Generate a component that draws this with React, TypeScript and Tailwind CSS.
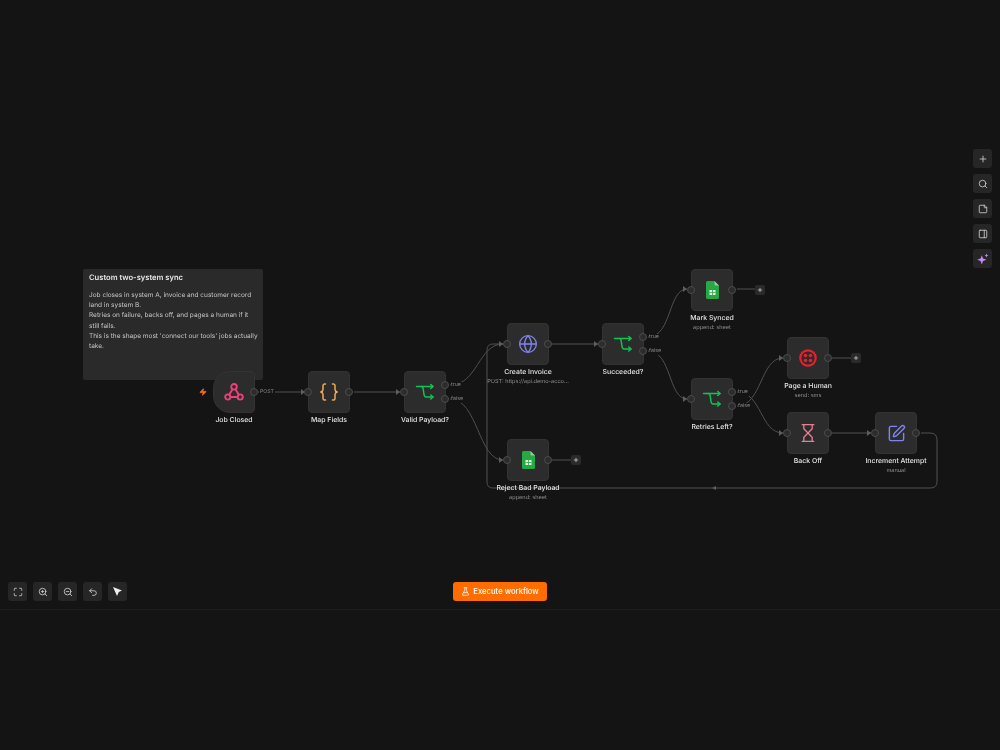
import { ReactNode } from 'react';
import { Maximize, ZoomIn, ZoomOut, Undo2, Plus, Search, StickyNote, PanelRight, Zap, FlaskConical, SquarePen, Hourglass, Globe } from 'lucide-react';

// canvas nodes: x/y are the node's top-left corner in the picture
type FlowNode = {
  id: string;
  x: number;
  y: number;
  label: string;
  sub?: string;
  icon: ReactNode;
  trigger?: boolean;
  outputs?: 'one' | 'branch';
  noInput?: boolean;
  plus?: boolean;
};

function IfIcon() {
  return (
    <svg width="20" height="20" viewBox="0 0 20 20" fill="none" stroke="#0fc552" strokeWidth="1.500" strokeLinecap="round" strokeLinejoin="round">
      <path d="M1.500 4.500H18" />
      <path d="M15.800 2.500 18 4.500l-2.200 2" />
      <path d="M6.500 4.500c1.200 0 1.500 1 1.800 3l.6 4.500c.3 2 .8 3 2.200 3H18" />
      <path d="M15.800 13 18 15l-2.200 2" />
    </svg>
  );
}

function SheetIcon() {
  return (
    <svg width="13" height="18" viewBox="0 0 13 18">
      <path d="M1.500 0H8.500L13 4.500V16.500A1.500 1.500 0 0 1 11.500 18H1.500A1.500 1.500 0 0 1 0 16.500V1.500A1.500 1.500 0 0 1 1.500 0Z" fill="#28a745" />
      <path d="M8.500 0 13 4.500H9.500a1 1 0 0 1-1-1Z" fill="#86d19a" />
      <path d="M3.500 9h6v5h-6z" fill="#e8f5e9" />
      <path d="M3.500 11.500h6M6.500 9v5" stroke="#28a745" strokeWidth="0.800" />
    </svg>
  );
}

function BracesIcon() {
  return (
    <svg width="20" height="20" viewBox="0 0 20 20" fill="none" stroke="#f0ab55" strokeWidth="1.500" strokeLinecap="round" strokeLinejoin="round">
      <path d="M6.500 2H5.500C4.400 2 4 2.700 4 3.800v3.700C4 8.700 3.200 9.600 1.800 10 3.200 10.400 4 11.300 4 12.500v3.700C4 17.300 4.400 18 5.500 18h1" />
      <path d="M13.500 2h1c1.100 0 1.500.7 1.500 1.800v3.700c0 1.200.8 2.100 2.200 2.500-1.400.4-2.200 1.300-2.200 2.500v3.700c0 1.100-.4 1.800-1.500 1.800h-1" />
    </svg>
  );
}

function TwilioIcon() {
  return (
    <svg width="18" height="18" viewBox="0 0 18 18" fill="none">
      <circle cx="9" cy="9" r="7.700" stroke="#e8202e" strokeWidth="2.200" />
      <circle cx="6.500" cy="6.500" r="1.800" fill="#e8202e" />
      <circle cx="11.500" cy="6.500" r="1.800" fill="#e8202e" />
      <circle cx="6.500" cy="11.500" r="1.800" fill="#e8202e" />
      <circle cx="11.500" cy="11.500" r="1.800" fill="#e8202e" />
    </svg>
  );
}

function WebhookIcon() {
  return (
    <svg width="20" height="20" viewBox="0 0 20 20" fill="none" stroke="#ec407a" strokeWidth="1.900" strokeLinecap="round" strokeLinejoin="round">
      <circle cx="10" cy="4.800" r="2.800" />
      <circle cx="3.800" cy="15" r="2.600" />
      <circle cx="16.200" cy="15" r="2.600" />
      <path d="M8.500 7.200 5.200 12.800" />
      <path d="M11.500 7.200l3.300 5.600" />
      <path d="M6.400 15h7.200" />
    </svg>
  );
}

function SparkIcon() {
  return (
    <svg width="12" height="12" viewBox="0 0 12 12" fill="#c58af9">
      <path d="M4.800 2.200 6 5.600l3.400 1.200L6 8 4.800 11.400 3.600 8 .2 6.800l3.400-1.200Z" />
      <path d="M9.500.5l.6 1.400 1.400.6-1.400.6-.6 1.400-.6-1.400-1.400-.6 1.400-.6Z" />
    </svg>
  );
}

const nodes: FlowNode[] = [
  { id: 'job', x: 213, y: 371, label: 'Job Closed', trigger: true, noInput: true, outputs: 'one', icon: <WebhookIcon /> },
  { id: 'map', x: 308, y: 371, label: 'Map Fields', outputs: 'one', icon: <BracesIcon /> },
  { id: 'valid', x: 404, y: 371, label: 'Valid Payload?', outputs: 'branch', icon: <IfIcon /> },
  { id: 'invoice', x: 507, y: 323, label: 'Create Invoice', sub: 'POST: https://api.demo-acco...', outputs: 'one', icon: <Globe size={20} color="#8183ec" strokeWidth={1.6} /> },
  { id: 'reject', x: 507, y: 439, label: 'Reject Bad Payload', sub: 'append: sheet', outputs: 'one', plus: true, icon: <SheetIcon /> },
  { id: 'succeeded', x: 602, y: 323, label: 'Succeeded?', outputs: 'branch', icon: <IfIcon /> },
  { id: 'synced', x: 691, y: 269, label: 'Mark Synced', sub: 'append: sheet', outputs: 'one', plus: true, icon: <SheetIcon /> },
  { id: 'retries', x: 691, y: 378, label: 'Retries Left?', outputs: 'branch', icon: <IfIcon /> },
  { id: 'page', x: 787, y: 337, label: 'Page a Human', sub: 'send: sms', outputs: 'one', plus: true, icon: <TwilioIcon /> },
  { id: 'backoff', x: 787, y: 412, label: 'Back Off', outputs: 'one', icon: <Hourglass size={20} color="#e57f96" strokeWidth={1.6} /> },
  { id: 'increment', x: 875, y: 412, label: 'Increment Attempt', sub: 'manual', outputs: 'one', icon: <SquarePen size={19} color="#8183ec" strokeWidth={1.8} /> },
];

const edges = [
  'M258 392H305',
  'M354 392H400',
  'M450 385C478 385 478 344 503 344',
  'M450 399C478 399 478 460 503 460',
  'M552 344H598',
  'M648 337C672 337 668 289 687 289',
  'M648 351C672 351 668 399 687 399',
  'M737 392C762 392 760 433 783 433',
  'M737 406C762 406 760 358 783 358',
  'M832 433H871',
  'M921 433H930Q937 433 937 440V482Q937 488 930 488H493Q487 488 487 482V350Q487 344 493 344H503',
  'M552 460H571',
  'M737 289H756',
  'M832 358H851',
];

const arrows = [[305, 392], [400, 392], [503, 344], [503, 460], [598, 344], [687, 289], [687, 399], [783, 358], [783, 433], [871, 433]];

function Handle({ className }: { className: string }) {
  return <span className={`absolute size-[8px] rounded-full border border-[#4c4c4c] bg-[#2c2c2c] ${className}`} />;
}

function Node({ node }: { node: FlowNode }) {
  return (
    <div className="absolute w-[42px]" style={{ left: node.x, top: node.y }}>
      <div className={`relative flex size-[42px] items-center justify-center border border-[#333333] bg-[#2c2c2c] ${node.trigger ? 'rounded-[4px] rounded-l-[17px]' : 'rounded-[4px]'}`}>
        {node.icon}
        {!node.noInput && <Handle className="left-[-5px] top-[16px]" />}
        {node.outputs === 'one' && <Handle className="right-[-4px] top-[16px]" />}
        {node.outputs === 'branch' && (
          <>
            <Handle className="right-[-4px] top-[9px]" />
            <Handle className="right-[-4px] top-[23px]" />
            <span className="absolute left-[46px] top-[10px] bg-[#141414] pr-[1px] text-[5.300px] leading-[7px] text-[#8a8a8a]">true</span>
            <span className="absolute left-[46px] top-[24px] bg-[#141414] pr-[1px] text-[5.300px] leading-[7px] text-[#8a8a8a]">false</span>
          </>
        )}
        {node.trigger && <span className="absolute left-[45px] top-[17px] bg-[#141414] px-[1px] text-[5.200px] leading-[7px] text-[#8a8a8a]">POST</span>}
        {node.trigger && <Zap size={8} className="absolute left-[-15px] top-[16px]" color="#f26a1b" fill="#f26a1b" />}
      </div>
      <div className="absolute left-1/2 top-[43px] flex w-[110px] -translate-x-1/2 flex-col items-center gap-[1px] text-center">
        <span className="text-[6.900px] font-medium leading-[11px] text-[#e6e6e6]">{node.label}</span>
        {node.sub && <span className="text-[5.600px] leading-[8px] text-[#8f8f8f]">{node.sub}</span>}
      </div>
      {node.plus && (
        <button className="absolute left-[64px] top-[16px] flex size-[10px] items-center justify-center rounded-[2px] bg-[#2a2a2a]">
          <Plus size={6} color="#d0d0d0" strokeWidth={3} />
        </button>
      )}
    </div>
  );
}

function ToolButton({ children }: { children: ReactNode }) {
  return <button className="flex size-[19px] items-center justify-center rounded-[3px] bg-[#262626]">{children}</button>;
}

export default function App() {
  return (
    <div className="flex h-[750px] w-[1000px] flex-col overflow-hidden bg-[#141414] font-['Inter',sans-serif] [text-rendering:geometricPrecision]">
      <div className="relative h-[610px] border-b border-[#1e1e1e] bg-[radial-gradient(#242424_0.5px,transparent_0.6px)] bg-[length:14px_14px] [will-change:transform]">
        {/* sticky note sits behind the trigger */}
        <div className="absolute left-[83px] top-[269px] h-[111px] w-[180px] rounded-[2px] bg-[#2a2a2a] py-[4px] pl-[6px] pr-[4px] text-[6.500px] leading-[10.200px] text-[#c4c4c4]">
          <h3 className="mb-[7px] text-[7.600px] font-semibold leading-[10px] text-[#e8e8e8]">Custom two-system sync</h3>
          <p className="pr-[6px]">Job closes in system A, invoice and customer record land in system B.</p>
          <p className="pr-[6px]">Retries on failure, backs off, and pages a human if it still fails.</p>
          <p>This is the shape most 'connect our tools' jobs actually take.</p>
        </div>

        <svg className="absolute inset-0" width="1000" height="609" fill="none">
          {edges.map((d) => (
            <path key={d} d={d} stroke="#505050" strokeWidth="1" />
          ))}
          {arrows.map(([x, y]) => (
            <path key={`${x}-${y}`} d={`M${x - 4} ${y - 3}L${x} ${y}L${x - 4} ${y + 3}Z`} fill="#5e5e5e" />
          ))}
          <path d="M716 486L712 488L716 490Z" fill="#5e5e5e" />
        </svg>

        {nodes.map((node) => (
          <Node key={node.id} node={node} />
        ))}

        <div className="absolute right-[8px] top-[149px] flex flex-col gap-[6px]">
          <ToolButton><Plus size={10} color="#d0d0d0" /></ToolButton>
          <ToolButton><Search size={10} color="#d0d0d0" /></ToolButton>
          <ToolButton><StickyNote size={10} color="#d0d0d0" /></ToolButton>
          <ToolButton><PanelRight size={10} color="#d0d0d0" /></ToolButton>
          <ToolButton><SparkIcon /></ToolButton>
        </div>

        <div className="absolute bottom-[8px] left-[8px] flex gap-[6px]">
          <ToolButton><Maximize size={10} color="#d0d0d0" /></ToolButton>
          <ToolButton><ZoomIn size={10} color="#d0d0d0" /></ToolButton>
          <ToolButton><ZoomOut size={10} color="#d0d0d0" /></ToolButton>
          <ToolButton><Undo2 size={10} color="#d0d0d0" /></ToolButton>
          <ToolButton>
            <svg width="11" height="11" viewBox="0 0 11 11"><path d="M1 1l9 3.500-3.200 1.400L5 10Z" fill="#eeeeee" /></svg>
          </ToolButton>
        </div>

        <button className="absolute bottom-[8px] left-[453px] flex h-[19px] w-[94px] items-center justify-center gap-[3px] rounded-[3px] bg-[#ff6d00] text-[7.700px] font-medium text-white">
          <FlaskConical size={9} color="#ffffff" />
          Execute workflow
        </button>
      </div>
      <div className="flex-1 bg-[#141414]" />
    </div>
  );
}
